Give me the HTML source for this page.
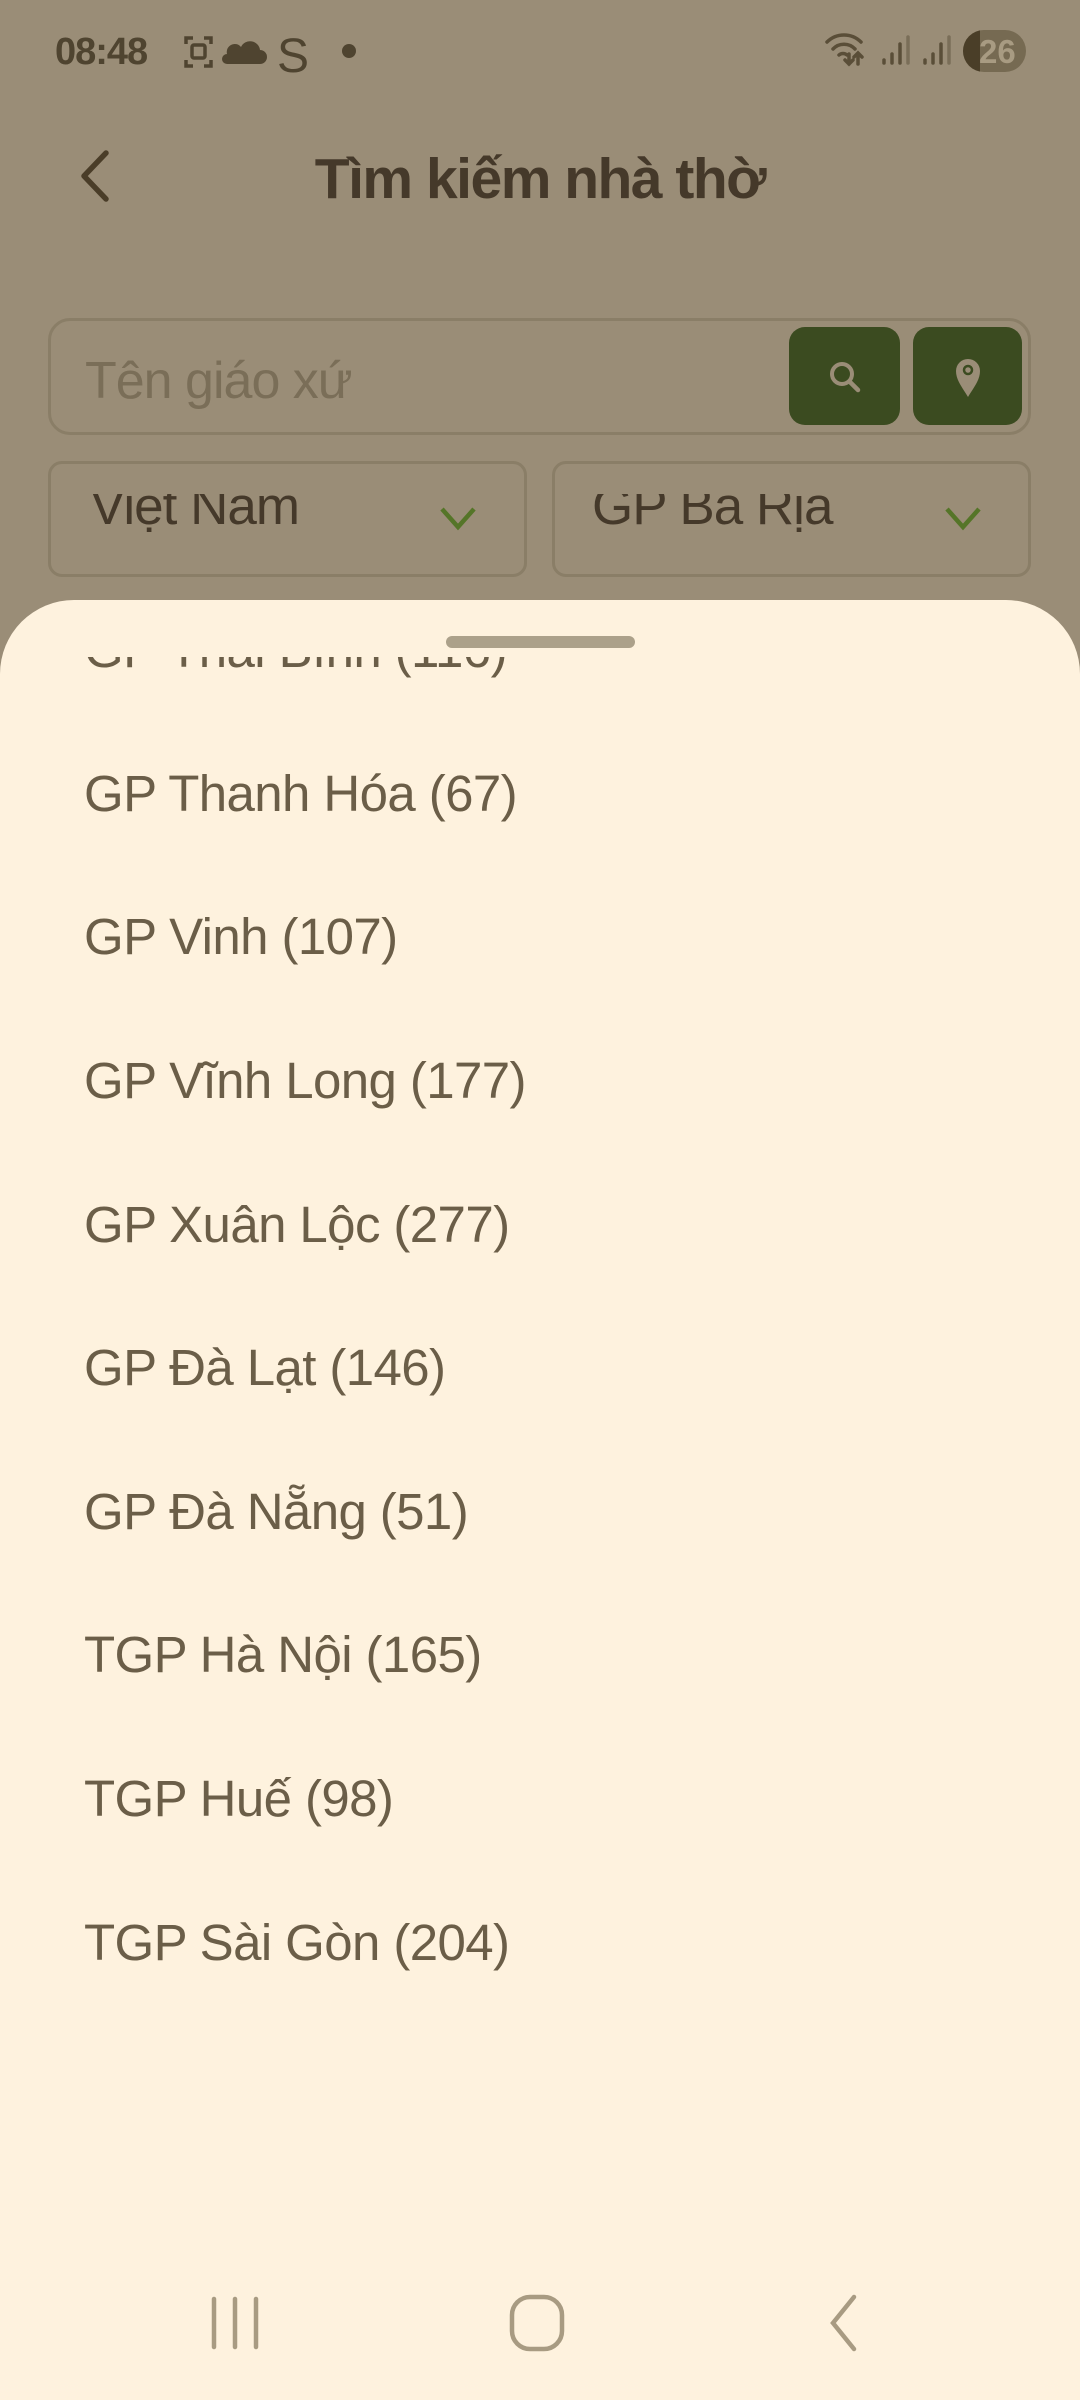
<!DOCTYPE html>
<html><head><meta charset="utf-8"><style>
*{margin:0;padding:0;box-sizing:border-box}
body{width:1080px;height:2400px;overflow:hidden;background:#9a8d77;font-family:"Liberation Sans","Noto Sans CJK SC",sans-serif;position:relative}
.abs{position:absolute}
.txt{white-space:nowrap;line-height:1}
</style></head><body>
<!-- status bar -->
<div class="abs txt" style="left:55px;top:33px;font-size:38px;font-weight:bold;color:#4f4430;letter-spacing:-1px">08:48</div>
<svg class="abs" style="left:180px;top:30px" width="170" height="45" viewBox="0 0 170 45">
<g fill="none" stroke="#4f4430" stroke-width="3.5">
<path d="M6 14v-6h7M24 8h7v6M31 30v6h-7M13 36H6v-6"/>
<rect x="12" y="15" width="13" height="13" rx="2"/>
</g>
<path d="M47 34h33a7 7 0 0 0 0-14a10 10 0 0 0-19-3a8 8 0 0 0-14 7a5 5 0 0 0 0 10z" fill="#4f4430"/>
<text x="97" y="42" font-size="48" fill="#4f4430" font-family="Liberation Sans">S</text>
</svg>
<div class="abs" style="left:342px;top:44px;width:14px;height:14px;border-radius:50%;background:#4f4430"></div>
<svg class="abs" style="left:825px;top:32px" width="130" height="36" viewBox="0 0 130 36">
<g fill="none" stroke="#5a4e38" stroke-width="3.5" stroke-linecap="round">
<path d="M2 10a24 24 0 0 1 34 0M8 17a15 15 0 0 1 22 0M14 23a6 6 0 0 1 8 0"/>
<path d="M24 22v10M20 28l4 4 4-4M33 32V21M29 25l4-4 4 4"/>
<path d="M59 31v-3M67 31v-9M75 31V12"/><path d="M83 31V5" stroke="#7a6e58"/>
<path d="M100 31v-3M108 31v-9M116 31V12"/><path d="M124 31V5" stroke="#7a6e58"/>
</g></svg>
<div class="abs" style="left:963px;top:30px;width:63px;height:42px;border-radius:21px;background:#766a52;overflow:hidden">
<div class="abs" style="left:0;top:0;width:17px;height:42px;background:#4a3e28"></div>
<div class="abs txt" style="left:16px;top:5px;font-size:33px;font-weight:bold;color:#a89b82">26</div>
</div>
<!-- header -->
<svg class="abs" style="left:76px;top:148px" width="40" height="56" viewBox="0 0 40 56">
<path d="M30 5L8 28l22 23" fill="none" stroke="#4a3d28" stroke-width="5.5" stroke-linecap="round" stroke-linejoin="round"/></svg>
<div class="abs txt" style="left:0;width:1080px;top:151px;text-align:center;font-size:57px;font-weight:bold;color:#45392a;letter-spacing:-1.5px">Tìm kiếm nhà thờ</div>
<!-- search box -->
<div class="abs" style="left:48px;top:318px;width:983px;height:117px;border:3px solid #8a7e67;border-radius:22px"></div>
<div class="abs txt" style="left:85px;top:355px;font-size:52px;color:#7a6e58;letter-spacing:-1px">Tên giáo xứ</div>
<div class="abs" style="left:789px;top:327px;width:111px;height:98px;border-radius:16px;background:#3b4b20"></div>
<svg class="abs" style="left:822px;top:355px" width="46" height="46" viewBox="0 0 46 46"><circle cx="20" cy="19" r="10" fill="none" stroke="#9a8d77" stroke-width="4"/><path d="M28 27l8 8" stroke="#9a8d77" stroke-width="4.5" stroke-linecap="round"/></svg>
<div class="abs" style="left:913px;top:327px;width:109px;height:98px;border-radius:16px;background:#3b4b20"></div>
<svg class="abs" style="left:948px;top:355px" width="40" height="46" viewBox="0 0 40 46"><path d="M20 42C14 32 8 25 8 16a12 12 0 0 1 24 0c0 9-6 16-12 26z" fill="#9a8d77"/><circle cx="20" cy="15" r="4" fill="none" stroke="#3b4b20" stroke-width="2.5"/></svg>
<!-- dropdowns -->
<div class="abs" style="left:48px;top:461px;width:479px;height:116px;border:3px solid #8a7e67;border-radius:14px"></div>
<div class="abs" style="left:552px;top:461px;width:479px;height:116px;border:3px solid #8a7e67;border-radius:14px"></div>
<div class="abs" style="left:60px;top:494px;width:960px;height:60px;overflow:hidden">
<div class="abs txt" style="left:30px;top:-14px;font-size:53px;color:#45392a;letter-spacing:-1px">Việt Nam</div>
<div class="abs txt" style="left:532px;top:-14px;font-size:53px;color:#45392a;letter-spacing:-1px">GP Bà Rịa</div>
</div>
<svg class="abs" style="left:438px;top:503px" width="40" height="28" viewBox="0 0 40 28"><path d="M4 6l16 18L36 6" fill="none" stroke="#557528" stroke-width="4.5"/></svg>
<svg class="abs" style="left:943px;top:503px" width="40" height="28" viewBox="0 0 40 28"><path d="M4 6l16 18L36 6" fill="none" stroke="#557528" stroke-width="4.5"/></svg>
<!-- sheet -->
<div class="abs" style="left:0;top:600px;width:1080px;height:1800px;background:#fef2de;border-radius:74px 74px 0 0"></div>
<div class="abs" style="left:446px;top:636px;width:189px;height:12px;border-radius:6px;background:#aca18a"></div>
<div class="abs" style="left:0;top:657px;width:1080px;height:1500px;overflow:hidden;font-size:51px;color:#6b5e48;letter-spacing:-0.6px">
<div class="abs txt" style="left:84px;top:-33px">GP Thái Bình (116)</div>
<div class="abs txt" style="left:84px;top:111px">GP Thanh Hóa (67)</div>
<div class="abs txt" style="left:84px;top:254px">GP Vinh (107)</div>
<div class="abs txt" style="left:84px;top:398px">GP Vĩnh Long (177)</div>
<div class="abs txt" style="left:84px;top:542px">GP Xuân Lộc (277)</div>
<div class="abs txt" style="left:84px;top:685px">GP Đà Lạt (146)</div>
<div class="abs txt" style="left:84px;top:829px">GP Đà Nẵng (51)</div>
<div class="abs txt" style="left:84px;top:972px">TGP Hà Nội (165)</div>
<div class="abs txt" style="left:84px;top:1116px">TGP Huế (98)</div>
<div class="abs txt" style="left:84px;top:1260px">TGP Sài Gòn (204)</div>
</div>
<!-- nav bar -->
<svg class="abs" style="left:200px;top:2290px" width="680" height="66" viewBox="0 0 680 66">
<g fill="none" stroke="#a89b82" stroke-width="4.5" stroke-linecap="round">
<path d="M14 9v48M35 9v48M56 9v48"/>
<rect x="312" y="7" width="50" height="52" rx="18"/>
<path d="M654 7l-21 26 21 26"/>
</g></svg>
</body></html>
